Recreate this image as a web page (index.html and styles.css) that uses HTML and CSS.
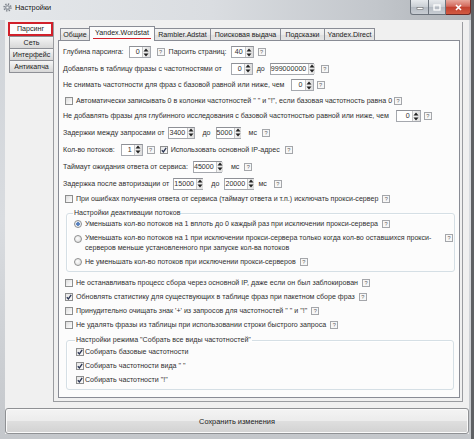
FILE: index.html
```html
<!DOCTYPE html>
<html lang="ru">
<head>
<meta charset="utf-8">
<title>Настройки</title>
<link rel="stylesheet" href="styles.css">
</head>
<body>
<div class="window">
  <div class="titlebar">
    <svg class="appicon" width="9" height="9" viewBox="0 0 9 9">
      <circle cx="4.5" cy="4.5" r="3.4" fill="none" stroke="#7d838b" stroke-width="1.6" stroke-dasharray="1.3 1.37"/>
      <circle cx="4.5" cy="4.5" r="2.6" fill="#9aa0a8"/>
      <circle cx="4.5" cy="4.5" r="1.1" fill="#eef0f2"/>
    </svg>
    <span class="title">Настройки</span>
    <div class="controls">
      <span class="cbtn cmin"><svg width="8" height="5" viewBox="0 0 8 5"><rect x="1" y="2.5" width="6" height="2" fill="#fff" stroke="#555" stroke-width="0.5"/></svg></span>
      <span class="cbtn cmax"><svg width="8" height="7" viewBox="0 0 8 7"><rect x="1" y="1" width="6" height="5" fill="none" stroke="#fff" stroke-width="1.3"/></svg></span>
      <span class="cbtn cclose"><svg width="9" height="7" viewBox="0 0 9 7"><path d="M2 1 L7 6 M7 1 L2 6" stroke="#fff" stroke-width="1.6"/></svg></span>
    </div>
  </div>
  <div class="frame">
    <div class="client">
      <div class="main">
        <div class="sidetabs">
          <div class="stab active">Парсинг</div>
          <div class="stab">Сеть</div>
          <div class="stab">Интерфейс</div>
          <div class="stab">Антикапча</div>
        </div>
        <div class="outer">
          <div class="tabs">
            <span class="tab t1">Общие</span>
            <span class="tab sel t2"><span class="mark">Yandex.Wordstat</span></span>
            <span class="tab t3">Rambler.Adstat</span>
            <span class="tab t4">Поисковая выдача</span>
            <span class="tab t5">Подсказки</span>
            <span class="tab t6">Yandex.Direct</span>
          </div>
          <div class="panel">
            <div class="row h16">
              <span class="lab">Глубина парсинга:</span>
              <span class="spin w22 ml5"><span class="val">0</span><span class="arr"><svg width="6" height="9" viewBox="0 0 6 9"><path d="M3 0.5 L5.5 3.5 H0.5Z M3 8.5 L5.5 5.5 H0.5Z" fill="#222"/></svg></span></span>
              <span class="help ml6">?</span>
              <span class="lab ml4">Парсить страниц:</span>
              <span class="spin w23 ml4"><span class="val">40</span><span class="arr"><svg width="6" height="9" viewBox="0 0 6 9"><path d="M3 0.5 L5.5 3.5 H0.5Z M3 8.5 L5.5 5.5 H0.5Z" fill="#222"/></svg></span></span>
              <span class="help ml4">?</span>
            </div>
            <div class="row h17">
              <span class="lab">Добавлять в таблицу фразы с частотностями от</span>
              <span class="spin w22 ml9"><span class="val">0</span><span class="arr"><svg width="6" height="9" viewBox="0 0 6 9"><path d="M3 0.5 L5.5 3.5 H0.5Z M3 8.5 L5.5 5.5 H0.5Z" fill="#222"/></svg></span></span>
              <span class="lab ml4">до</span>
              <span class="spin w44 ml5"><span class="val">999000000</span><span class="arr"><svg width="6" height="9" viewBox="0 0 6 9"><path d="M3 0.5 L5.5 3.5 H0.5Z M3 8.5 L5.5 5.5 H0.5Z" fill="#222"/></svg></span></span>
              <span class="help ml7">?</span>
            </div>
            <div class="row h16">
              <span class="lab">Не снимать частотности для фраз с базовой равной или ниже, чем</span>
              <span class="spin w23 ml6"><span class="val">0</span><span class="arr"><svg width="6" height="9" viewBox="0 0 6 9"><path d="M3 0.5 L5.5 3.5 H0.5Z M3 8.5 L5.5 5.5 H0.5Z" fill="#222"/></svg></span></span>
              <span class="help ml3">?</span>
            </div>
            <div class="row h15">
              <span class="cb ml2"></span>
              <span class="lab ml3">Автоматически записывать 0 в колонки частотностей " " и "!", если базовая частотность равна 0</span>
              <span class="help ml2">?</span>
            </div>
            <div class="row h16">
              <span class="lab">Не добавлять фразы для глубинного исследования с базовой частотностью равной или ниже, чем</span>
              <span class="spin w25 ml7"><span class="val">0</span><span class="arr"><svg width="6" height="9" viewBox="0 0 6 9"><path d="M3 0.5 L5.5 3.5 H0.5Z M3 8.5 L5.5 5.5 H0.5Z" fill="#222"/></svg></span></span>
              <span class="help ml3">?</span>
            </div>
            <div class="row h17">
              <span class="lab">Задержки между запросами от</span>
              <span class="spin w27 ml4"><span class="val">3400</span><span class="arr"><svg width="6" height="9" viewBox="0 0 6 9"><path d="M3 0.5 L5.5 3.5 H0.5Z M3 8.5 L5.5 5.5 H0.5Z" fill="#222"/></svg></span></span>
              <span class="lab ml7">до</span>
              <span class="spin w25 ml5"><span class="val">5000</span><span class="arr"><svg width="6" height="9" viewBox="0 0 6 9"><path d="M3 0.5 L5.5 3.5 H0.5Z M3 8.5 L5.5 5.5 H0.5Z" fill="#222"/></svg></span></span>
              <span class="lab ml8">мс</span>
              <span class="help ml5">?</span>
            </div>
            <div class="row h17">
              <span class="lab">Кол-во потоков:</span>
              <span class="spin w22 ml6"><span class="val">1</span><span class="arr"><svg width="6" height="9" viewBox="0 0 6 9"><path d="M3 0.5 L5.5 3.5 H0.5Z M3 8.5 L5.5 5.5 H0.5Z" fill="#222"/></svg></span></span>
              <span class="help ml4">?</span>
              <span class="cb on ml5"><svg width="6" height="6" viewBox="0 0 6 6"><path d="M0.8 3.2 L2.4 4.9 L5.2 0.9" fill="none" stroke="#2b3553" stroke-width="1.3"/></svg></span>
              <span class="lab ml3">Использовать основной IP-адрес</span>
              <span class="help ml5">?</span>
            </div>
            <div class="row h17">
              <span class="lab">Таймаут ожидания ответа от сервиса:</span>
              <span class="spin w29 ml5"><span class="val">45000</span><span class="arr"><svg width="6" height="9" viewBox="0 0 6 9"><path d="M3 0.5 L5.5 3.5 H0.5Z M3 8.5 L5.5 5.5 H0.5Z" fill="#222"/></svg></span></span>
              <span class="lab ml9">мс</span>
              <span class="help ml5">?</span>
            </div>
            <div class="row h17">
              <span class="lab">Задержка после авторизации от</span>
              <span class="spin w30 ml4"><span class="val">15000</span><span class="arr"><svg width="6" height="9" viewBox="0 0 6 9"><path d="M3 0.5 L5.5 3.5 H0.5Z M3 8.5 L5.5 5.5 H0.5Z" fill="#222"/></svg></span></span>
              <span class="lab ml8">до</span>
              <span class="spin w30 ml5"><span class="val">20000</span><span class="arr"><svg width="6" height="9" viewBox="0 0 6 9"><path d="M3 0.5 L5.5 3.5 H0.5Z M3 8.5 L5.5 5.5 H0.5Z" fill="#222"/></svg></span></span>
              <span class="lab ml4">мс</span>
              <span class="help ml7">?</span>
            </div>
            <div class="row h14">
              <span class="cb ml2"></span>
              <span class="lab ml3">При ошибках получения ответа от сервиса (таймаут ответа и т.п.) исключать прокси-сервер</span>
              <span class="help ml4">?</span>
            </div>

            <fieldset class="group g1">
              <legend>Настройки деактивации потоков</legend>
              <div class="row h12">
                <span class="rb on"></span>
                <span class="lab ml3">Уменьшать кол-во потоков на 1 вплоть до 0 каждый раз при исключении прокси-сервера</span>
                <span class="help ml4">?</span>
              </div>
              <div class="row2">
                <span class="rb"></span>
                <span class="lab2 ml3">Уменьшать кол-во потоков на 1 при исключении прокси-сервера только когда кол-во оставшихся прокси-<br>серверов меньше установленного при запуске кол-ва потоков</span>
                <span class="help far">?</span>
              </div>
              <div class="row h12 mt3">
                <span class="rb"></span>
                <span class="lab ml3">Не уменьшать кол-во потоков при исключении прокси-серверов</span>
                <span class="help ml4">?</span>
              </div>
            </fieldset>

            <div class="row h14 mt4">
              <span class="cb ml2"></span>
              <span class="lab ml3">Не останавливать процесс сбора через основной IP, даже если он был заблокирован</span>
              <span class="help ml4">?</span>
            </div>
            <div class="row h14">
              <span class="cb on ml2"><svg width="6" height="6" viewBox="0 0 6 6"><path d="M0.8 3.2 L2.4 4.9 L5.2 0.9" fill="none" stroke="#2b3553" stroke-width="1.3"/></svg></span>
              <span class="lab ml3">Обновлять статистику для существующих в таблице фраз при пакетном сборе фраз</span>
              <span class="help ml4">?</span>
            </div>
            <div class="row h14">
              <span class="cb ml2"></span>
              <span class="lab ml3">Принудительно очищать знак '+' из запросов для частотностей " " и "!"</span>
              <span class="help ml4">?</span>
            </div>
            <div class="row h14">
              <span class="cb ml2"></span>
              <span class="lab ml3">Не удалять фразы из таблицы при использовании строки быстрого запроса</span>
              <span class="help ml4">?</span>
            </div>

            <fieldset class="group g2">
              <legend>Настройки режима "Собрать все виды частотностей"</legend>
              <div class="row h14">
                <span class="cb on"><svg width="6" height="6" viewBox="0 0 6 6"><path d="M0.8 3.2 L2.4 4.9 L5.2 0.9" fill="none" stroke="#2b3553" stroke-width="1.3"/></svg></span>
                <span class="lab ml1">Собирать базовые частотности</span>
              </div>
              <div class="row h14">
                <span class="cb on"><svg width="6" height="6" viewBox="0 0 6 6"><path d="M0.8 3.2 L2.4 4.9 L5.2 0.9" fill="none" stroke="#2b3553" stroke-width="1.3"/></svg></span>
                <span class="lab ml1">Собирать частотности вида " "</span>
              </div>
              <div class="row h14">
                <span class="cb on"><svg width="6" height="6" viewBox="0 0 6 6"><path d="M0.8 3.2 L2.4 4.9 L5.2 0.9" fill="none" stroke="#2b3553" stroke-width="1.3"/></svg></span>
                <span class="lab ml1">Собирать частотности "!"</span>
              </div>
            </fieldset>
          </div>
        </div>
      </div>
      <div class="savebtn">Сохранить изменения</div>
    </div>
  </div>
</div>
</body>
</html>
```
FILE: styles.css
```css
* { box-sizing: border-box; }
html, body { margin: 0; padding: 0; }
body {
  width: 474px;
  height: 439px;
  overflow: hidden;
  background: #7a7d80;
  font-family: "Liberation Sans", Arial, sans-serif;
  font-size: 7.1px;
  color: #303030;
}
.window {
  width: 474px;
  height: 439px;
  display: flex;
  flex-direction: column;
  background: linear-gradient(180deg, #cfd3d8 0%, #d9dce0 50%, #c4c7cb 100%);
  border-right: 3px solid #5f6164;
}
.titlebar {
  height: 20px;
  display: flex;
  align-items: flex-start;
  padding-left: 3px;
  background: linear-gradient(90deg, #e4e7ea 0%, #dadde1 45%, #c2c6cb 80%, #aeb2b7 100%);
}
.appicon { margin-top: 3px; }
.title {
  margin-left: 3px;
  margin-top: 3px;
  font-size: 7.4px;
  color: #111;
  text-shadow: 0 0 3px #fff;
}
.controls {
  margin-left: auto;
  display: flex;
  height: 15px;
}
.cbtn {
  height: 15px;
  display: flex;
  align-items: center;
  justify-content: center;
  border: 1px solid #6c737c;
  border-top: none;
}
.cmin {
  width: 19px;
  border-radius: 0 0 0 3px;
  background: linear-gradient(180deg, #e6e9ec 0%, #c9ced4 50%, #b4bac2 51%, #c8cdd3 100%);
}
.cmax {
  width: 17px;
  border-left: none;
  background: linear-gradient(180deg, #e6e9ec 0%, #c9ced4 50%, #b4bac2 51%, #c8cdd3 100%);
}
.cclose {
  width: 25px;
  border-left: none;
  border-color: #6e2b26;
  border-radius: 0 0 3px 0;
  background: linear-gradient(180deg, #e8a89c 0%, #d36a5c 45%, #c2412f 52%, #d25a42 100%);
}
.frame {
  flex: 1;
  display: flex;
  padding: 0 2px 5px 5px;
}
.client {
  flex: 1;
  display: flex;
  flex-direction: column;
  background: #f0f0f0;
}
.main {
  height: 382px;
  display: flex;
  padding-top: 2px;
}
.sidetabs {
  width: 48px;
  padding-left: 3px;
  display: flex;
  flex-direction: column;
}
.stab {
  width: 44px;
  height: 12px;
  margin-left: 1px;
  display: flex;
  align-items: center;
  justify-content: center;
  border: 1px solid #8e9096;
  border-right: none;
  background: linear-gradient(180deg, #f6f6f6 0%, #e6e6e6 50%, #d8d8d8 100%);
  color: #222;
}
.stab + .stab { margin-top: -1px; height: 13px; }
.stab.active {
  width: 45px;
  height: 14px;
  margin-left: 0;
  border: 2px solid #d1202a;
  background: #fdfdfd;
  margin-bottom: 1px;
}
.outer {
  width: 410px;
  height: 380px;
  border: 1px solid #9a9ca0;
  border-top: none;
  padding: 4px 2px 3px 4px;
  display: flex;
  flex-direction: column;
}
.tabs {
  height: 14px;
  display: flex;
  align-items: flex-end;
  padding-left: 2px;
}
.tab {
  height: 12px;
  display: flex;
  align-items: center;
  justify-content: center;
  border: 1px solid #898c95;
  border-bottom: none;
  background: linear-gradient(180deg, #f3f3f3 0%, #ebebeb 50%, #dedede 51%, #e4e4e4 100%);
  color: #222;
  white-space: nowrap;
}
.tab + .tab { margin-left: -1px; }
.t1 { width: 30px; }
.t2 { width: 66px; }
.t3 { width: 57px; }
.t4 { width: 71px; }
.t5 { width: 45px; }
.t6 { width: 51px; }
.tab.sel {
  height: 15px;
  margin-bottom: -1px;
  position: relative;
  z-index: 1;
  background: #fcfcfc;
  padding-bottom: 1px;
}
.mark {
  border-bottom: 1.5px solid #d1202a;
  padding: 0 2px;
  line-height: 9px;
}
.panel {
  height: 358px;
  width: 402px;
  border: 1px solid #898c95;
  background: #fcfcfc;
  padding: 3px 0 0 4px;
  display: flex;
  flex-direction: column;
}
.row {
  display: flex;
  align-items: center;
  white-space: nowrap;
}
.h12 { height: 12px; }
.h14 { height: 14px; }
.h15 { height: 15px; }
.h16 { height: 16px; }
.h17 { height: 17px; }
.mt3 { margin-top: 3px; }
.mt4 { margin-top: 4px; }
.ml1 { margin-left: 1px; }
.ml2 { margin-left: 2px; }
.ml3 { margin-left: 3px; }
.ml4 { margin-left: 4px; }
.ml5 { margin-left: 5px; }
.ml6 { margin-left: 6px; }
.ml7 { margin-left: 7px; }
.ml8 { margin-left: 8px; }
.ml9 { margin-left: 9px; }
.lab { line-height: 10px; }
.spin {
  height: 12px;
  display: flex;
  align-items: stretch;
  border: 1px solid #a5a8ae;
  border-top-color: #8e9096;
  background: #fff;
}
.spin .val {
  flex: 1;
  text-align: right;
  padding-right: 2px;
  line-height: 10px;
}
.spin .arr {
  width: 8px;
  display: flex;
  align-items: center;
  justify-content: center;
  background: linear-gradient(90deg, #f4f4f4, #dcdcdc);
  border-left: 1px solid #c6c6c6;
}
.w22 { width: 22px; }
.w23 { width: 23px; }
.w25 { width: 25px; }
.w27 { width: 27px; }
.w29 { width: 29px; }
.w30 { width: 30px; }
.w44 { width: 44px; }
.help {
  width: 8px;
  height: 8px;
  flex: none;
  border: 1px solid #a4a6aa;
  background: #f7f7f7;
  color: #666;
  font-size: 5.6px;
  line-height: 6px;
  text-align: center;
}
.cb {
  width: 8px;
  height: 8px;
  flex: none;
  border: 1px solid #8e8f8f;
  background: linear-gradient(135deg, #dcdcdc 0%, #f2f2f2 60%, #fdfdfd 100%);
  display: flex;
  align-items: center;
  justify-content: center;
}
.cb.on { background: linear-gradient(135deg, #e6e6e6 0%, #fafafa 100%); }
.rb {
  width: 8px;
  height: 8px;
  flex: none;
  border-radius: 50%;
  border: 1px solid #8e8f8f;
  background: radial-gradient(circle at 40% 40%, #fdfdfd, #d6d6d6);
}
.rb.on {
  background: radial-gradient(circle, #6b8fc7 0%, #3f6db3 35%, #e8eef6 45%, #f4f4f4 100%);
}
.group {
  margin: 0 4px 0 3px;
  padding: 0 1px 3px 7px;
  border: 1px solid #d5dfe5;
  border-radius: 3px;
  box-shadow: inset 1px 1px 0 #fff;
  min-width: 0;
}
.group legend {
  padding: 0 1px;
  margin-left: -1px;
  line-height: 10px;
  color: #303030;
}
.g1 { margin-top: 2px; }
.g2 { margin-top: 3px; padding-left: 9px; padding-bottom: 2px; margin-right: 5px; }
.row2 {
  display: flex;
  align-items: flex-start;
  white-space: nowrap;
  margin-top: 3px;
  height: 20px;
}
.row2 .rb { margin-top: 2px; }
.lab2 { line-height: 10px; }
.far { margin-left: auto; margin-top: 1px; }
.savebtn {
  margin-top: 6px;
  height: 26px;
  margin-right: 0;
  display: flex;
  align-items: center;
  justify-content: center;
  border: 1px solid #8f9194;
  border-radius: 3px;
  background: linear-gradient(180deg, #f4f4f4 0%, #ececec 48%, #dedede 52%, #d2d2d2 100%);
  box-shadow: inset 0 0 0 1px #fafafa;
  color: #222;
  font-size: 7.4px;
}
```
